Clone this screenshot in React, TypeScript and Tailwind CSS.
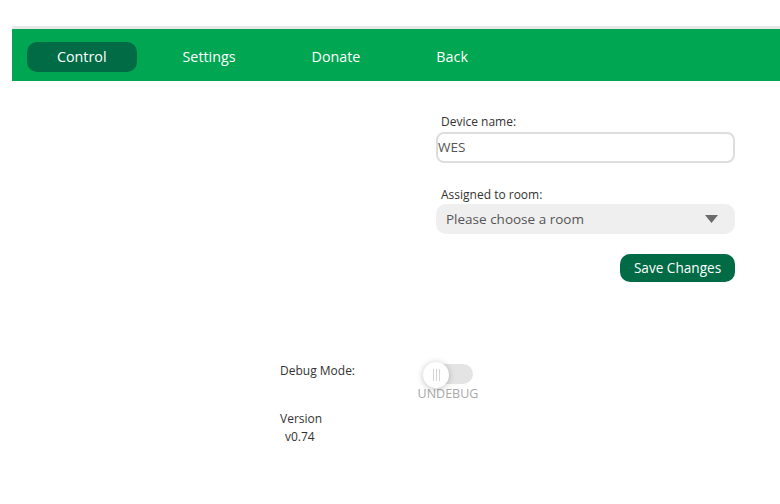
import React from "react";

export default function App() {
  const font = { fontFamily: '"Open Sans", "Noto Sans", sans-serif' };
  return (
    <div className="min-h-[504px] w-[780px] overflow-hidden bg-white pt-[26px] pl-[12px]" style={font}>
      <div className="h-[3px] w-[768px] bg-[#e8e8e8]" />
      <nav className="flex h-[52px] w-[768px] items-start gap-[16px] bg-[#00a651] pl-[15px] pt-[13px] text-[14.3px] text-white">
        <div className="flex h-[30px] items-center rounded-[10px] bg-[#006b45] px-[30px]">Control</div>
        <div className="flex h-[30px] items-center px-[30px]">Settings</div>
        <div className="flex h-[30px] items-center px-[30px]">Donate</div>
        <div className="flex h-[30px] items-center px-[30px]">Back</div>
      </nav>

      <div className="ml-[424px] flex w-[299px] flex-col pt-[33px]">
        <label className="pl-[5px] text-[12px] leading-[16px] text-[#333]">Device name:</label>
        <div className="mt-[2px] flex h-[31px] items-center rounded-[8px] border-2 border-[#dddddd] text-[13.5px] text-[#555]">
          WES
        </div>
        <label className="mt-[24px] pl-[5px] text-[12px] leading-[16px] text-[#333]">Assigned to room:</label>
        <div className="mt-[1px] flex h-[30px] items-center justify-between rounded-[10px] bg-[#efefef] pl-[10px] pr-[17px] text-[13.5px] text-[#555]">
          <span>Please choose a room</span>
          <svg width="13" height="8" viewBox="0 0 13 8">
            <polygon points="0,0 13,0 6.5,8" fill="#6b6b6b" />
          </svg>
        </div>
        <button className="mt-[20px] flex h-[28px] w-[115px] items-center justify-center self-end rounded-[10px] bg-[#006b45] text-[13.6px] text-white">
          Save Changes
        </button>
      </div>

      <div className="ml-[268px] mt-[80px] flex">
        <div className="w-[136px] pt-[1px] text-[12px] leading-[16px] text-[#333]">Debug Mode:</div>
        <div className="flex w-[64px] flex-col items-center">
          <div className="relative h-[26px] w-[50px]">
            <div className="absolute left-[3px] top-[2px] h-[20px] w-[47px] rounded-full bg-[#e4e4e4]" />
            <div className="absolute left-0 top-0 flex h-[26px] w-[26px] items-center justify-center gap-[2px] rounded-full bg-white shadow-[0_1px_6px_rgba(0,0,0,0.25)]">
              <span className="h-[12px] w-[1px] bg-[#d4d4d4]" />
              <span className="h-[12px] w-[1px] bg-[#d4d4d4]" />
              <span className="h-[12px] w-[1px] bg-[#d4d4d4]" />
            </div>
          </div>
          <div className="-mt-[3px] text-[12.5px] leading-[18px] text-[#a8a8a8]">UNDEBUG</div>
        </div>
      </div>

      <div className="ml-[268px] mt-[8px] text-[12px] leading-[16px] text-[#333]">Version</div>
      <div className="ml-[268px] mt-[2px] pl-[5px] text-[12px] leading-[16px] text-[#333]">v0.74</div>
    </div>
  );
}
